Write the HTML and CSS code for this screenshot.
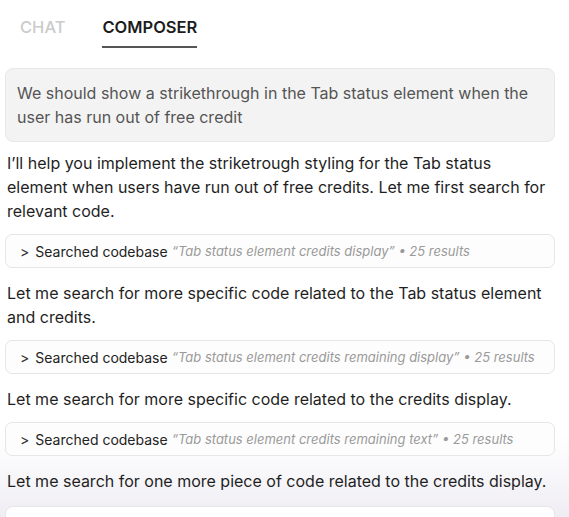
FILE: index.html
```html
<!DOCTYPE html>
<html>
<head>
<meta charset="utf-8">
<link rel="stylesheet" href="styles.css">
</head>
<body>
<div class="page">
  <nav class="tabs">
    <span class="tab">CHAT</span>
    <span class="tab active">COMPOSER</span>
  </nav>
  <div class="thread">
    <div class="user-msg">We should show a strikethrough in the Tab status element when the user has run out of free credit</div>
    <p class="msg first">I’ll help you implement the striketrough styling for the Tab status element when users have run out of free credits. Let me first search for relevant code.</p>
    <div class="tool"><span class="chev">&gt;</span><span class="tool-name">Searched codebase</span><span class="tool-meta">“Tab status element credits display” • 25 results</span></div>
    <p class="msg">Let me search for more specific code related to the Tab status element and credits.</p>
    <div class="tool"><span class="chev">&gt;</span><span class="tool-name">Searched codebase</span><span class="tool-meta">“Tab status element credits remaining display” • 25 results</span></div>
    <p class="msg">Let me search for more specific code related to the credits display.</p>
    <div class="tool"><span class="chev">&gt;</span><span class="tool-name">Searched codebase</span><span class="tool-meta">“Tab status element credits remaining text” • 25 results</span></div>
    <p class="msg">Let me search for one more piece of code related to the credits display.</p>
    <div class="input-card"></div>
  </div>
</div>
</body>
</html>
```
FILE: styles.css
```css
html, body {
  margin: 0;
  padding: 0;
  height: 100%;
  overflow: hidden;
}
body {
  font-family: Inter, "Liberation Sans", sans-serif;
  background: linear-gradient(to bottom, #ffffff 0px, #ffffff 435px, #efedf3 517px);
  color: #222;
}
.page {
  padding: 0 14px 0 5px;
}
.tabs {
  display: flex;
  gap: 37px;
  padding: 17px 0 0 15px;
  height: 33px;
}
.tab {
  font-size: 16.5px;
  font-weight: 500;
  color: #cbcbcb;
  line-height: 20px;
  height: 29px;
}
.tab.active {
  color: #1c1c1c;
  font-weight: 600;
  border-bottom: 2px solid #555;
}
.thread {
  display: flex;
  flex-direction: column;
  padding-top: 18px;
}
.user-msg {
  background: #f3f3f3;
  border: 1px solid #e8e8e8;
  border-radius: 8px;
  padding: 12px 11px;
  font-size: 16px;
  line-height: 24px;
  color: #555;
}
.msg {
  margin: 11px 0 0 2px;
  font-size: 16px;
  line-height: 24px;
  color: #1f1f1f;
}
.msg.first {
  margin-top: 9px;
}
.tool {
  margin-top: 11px;
  margin-bottom: 2px;
  height: 32px;
  border: 1px solid #e6e6e6;
  border-radius: 7px;
  background: #fdfdfd;
  display: flex;
  align-items: center;
  padding-left: 14px;
  font-size: 14px;
  white-space: nowrap;
}
.chev {
  font-size: 14px;
  color: #333;
  margin-right: 6px;
}
.tool-name {
  color: #222;
  margin-right: 4px;
}
.tool-meta {
  color: #9a9a9a;
  font-style: italic;
  font-size: 13px;
}
.input-card {
  margin-top: 13px;
  height: 40px;
  background: #ffffff;
  border: 1px solid #e6e6e6;
  border-radius: 8px;
}
```
